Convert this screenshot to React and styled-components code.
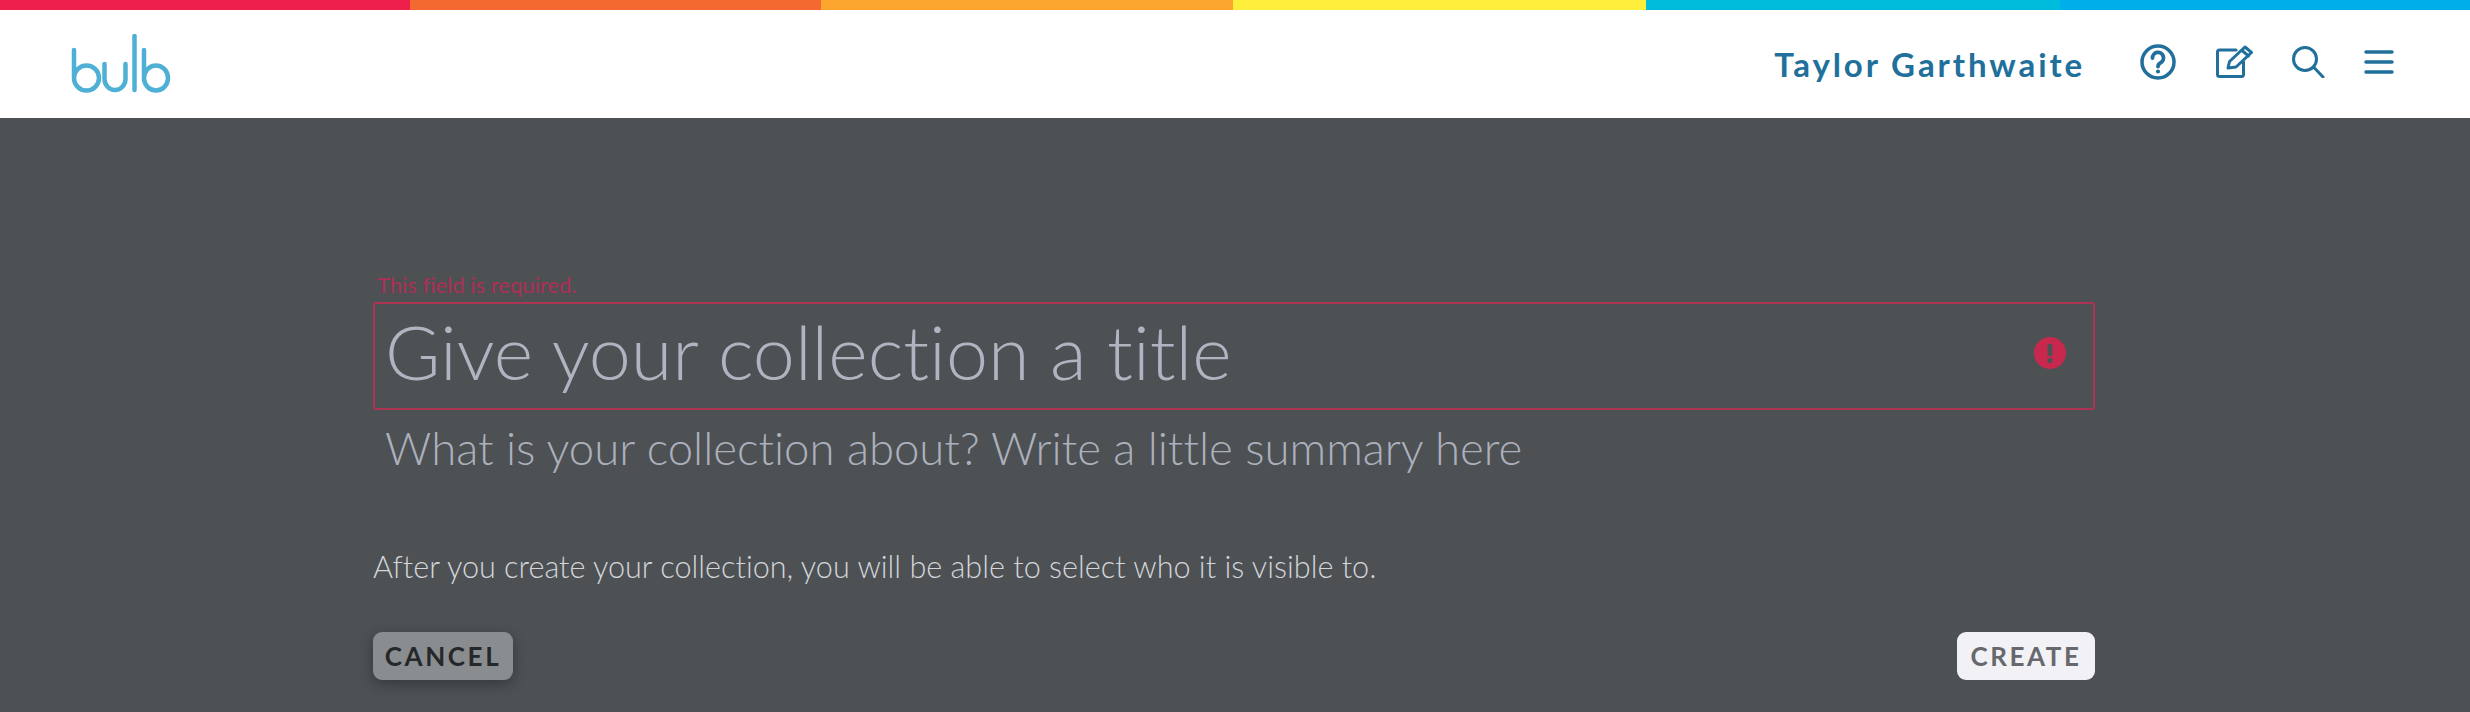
import React from "react";
import styled, { createGlobalStyle } from "styled-components";

const Global = createGlobalStyle`
html, body {
  margin: 0;
  padding: 0;
  background: #4d5154;
}
* { box-sizing: border-box; }
`;

const Page = styled.div`
  width: 2470px;
  height: 712px;
  overflow: hidden;
  display: flex;
  flex-direction: column;
  font-family: "Lato", sans-serif;
  font-variant-ligatures: none;
`;

const Rainbow = styled.div`
  display: flex;
  height: 10px;
`;

const Stripe = styled.div`
  width: ${(p) => p.size}px;
  background: ${(p) => p.color};
`;

const Header = styled.header`
  height: 108px;
  background: #fff;
  display: flex;
  align-items: center;
  justify-content: space-between;
  padding: 0 76px 0 71px;
`;

const Nav = styled.nav`
  display: flex;
  align-items: center;
`;

const UserName = styled.div`
  font-family: "Lato", sans-serif;
  font-weight: 700;
  font-size: 33px;
  letter-spacing: 2.9px;
  color: #20709b;
  margin-right: 55px;
`;

const IconButton = styled.div`
  display: flex;
  color: #20709b;
  margin-left: ${(p) => p.gap}px;
  margin-top: -5px;
`;

const Main = styled.main`
  flex: 1;
  background: #4d5154;
  padding: 155px 375px 0 373px;
  display: flex;
  flex-direction: column;
`;

const ErrorText = styled.div`
  font-size: 22px;
  line-height: 24px;
  padding-left: 4px;
  color: #ae2f54;
  margin-bottom: 5px;
`;

const TitleField = styled.div`
  height: 108px;
  border: 2px solid #ad3355;
  border-radius: 3px;
  display: flex;
  align-items: center;
  justify-content: space-between;
  padding: 0 27px 6px 10px;
`;

const TitlePlaceholder = styled.div`
  font-family: "Lato", sans-serif;
  font-weight: 300;
  font-size: 75.500px;
  line-height: 96px;
  margin-top: -4px;
  color: #b0b4c1;
`;

const Summary = styled.div`
  font-weight: 300;
  font-size: 45.500px;
  line-height: 60px;
  color: #acb0bc;
  padding-left: 12px;
  margin-top: 8px;
`;

const Notice = styled.div`
  font-weight: 300;
  font-size: 30.600px;
  line-height: 40px;
  color: #d3d5d9;
  margin-top: 69px;
`;

const Actions = styled.div`
  display: flex;
  justify-content: space-between;
  margin-top: 45px;
`;

const Button = styled.button`
  height: 48px;
  width: ${(p) => p.width}px;
  border: none;
  border-radius: 9px;
  padding: 0;
  font-family: "Lato", sans-serif;
  font-weight: 700;
  font-size: 26px;
  letter-spacing: 2.600px;
  text-transform: uppercase;
  background: ${(p) => (p.primary ? "#f1f1f6" : "#8a8d8f")};
  color: ${(p) => (p.primary ? "#66686d" : "#25282b")};
  box-shadow: ${(p) => (p.primary ? "none" : "0 4px 14px rgba(0, 0, 0, 0.3)")};
`;

const stripes = [
  { color: "#ef1f4c", size: 410 },
  { color: "#f4692f", size: 411 },
  { color: "#fba52f", size: 412 },
  { color: "#fdee3b", size: 413 },
  { color: "#00bcdc", size: 414 },
  { color: "#00aeea", size: 410 },
];

function LogoMark() {
  return (
    <svg width="100" height="60" viewBox="0 0 100 60" fill="none" stroke="#4fb0d5" strokeWidth="4.500" strokeLinecap="round">
      <path d="M3 16 V44 A12.500 12.500 0 1 0 15.500 31.500 A12.500 12.500 0 0 0 3 44" />
      <path d="M33.500 30 V45 A10.500 11 0 0 0 54.500 45 V30" />
      <path d="M63.500 2 V56" />
      <path d="M73 16 V44 A12 12.500 0 1 0 85 31.500 A12 12.500 0 0 0 73 44" />
    </svg>
  );
}

function HelpIcon() {
  return (
    <svg width="36" height="36" viewBox="0 0 36 36" fill="none" stroke="currentColor" strokeWidth="3.500" strokeLinecap="round">
      <circle cx="18" cy="18" r="16" />
      <path d="M12.500 14 A5.500 5.500 0 1 1 20.500 18.800 C18.800 19.800 18 20.700 18 22.500" strokeWidth="3.800" />
      <circle cx="18" cy="27.500" r="1.300" fill="currentColor" strokeWidth="1.500" />
    </svg>
  );
}

function EditIcon() {
  return (
    <svg width="38" height="33" viewBox="0 0 38 33" fill="none" stroke="currentColor" strokeWidth="3" strokeLinecap="round" strokeLinejoin="round">
      <path d="M20 5 H3.500 A2 2 0 0 0 1.500 7 V29.500 A2 2 0 0 0 3.500 31.500 H25.500 A2 2 0 0 0 27.500 29.500 V17" />
      <path d="M12 23 L13.500 16.500 L29 2 L35.500 7.500 L20 22 Z" />
      <path d="M26 5.500 L32.500 11" />
    </svg>
  );
}

function SearchIcon() {
  return (
    <svg width="33" height="32" viewBox="0 0 33 32" fill="none" stroke="currentColor" strokeWidth="3" strokeLinecap="round">
      <circle cx="13" cy="13" r="11.500" />
      <path d="M21.500 21 L31 31" />
    </svg>
  );
}

function MenuIcon() {
  return (
    <svg width="30" height="24" viewBox="0 0 30 24" fill="none" stroke="currentColor" strokeWidth="3.500" strokeLinecap="round">
      <path d="M2 2 H28" />
      <path d="M2 12 H28" />
      <path d="M2 22 H28" />
    </svg>
  );
}

function AlertIcon() {
  return (
    <svg width="32" height="32" viewBox="0 0 32 32">
      <circle cx="16" cy="16" r="16" fill="#c8274e" />
      <rect x="13.500" y="7" width="5" height="12" rx="1.500" fill="#4d5154" />
      <circle cx="16" cy="23.500" r="2.600" fill="#4d5154" />
    </svg>
  );
}

export default function App() {
  return (
    <Page>
      <Global />
      <Rainbow>
        {stripes.map((s) => (
          <Stripe key={s.color} color={s.color} size={s.size} />
        ))}
      </Rainbow>
      <Header>
        <LogoMark />
        <Nav>
          <UserName>Taylor Garthwaite</UserName>
          <IconButton gap={0}><HelpIcon /></IconButton>
          <IconButton gap={40}><EditIcon /></IconButton>
          <IconButton gap={38}><SearchIcon /></IconButton>
          <IconButton gap={39}><MenuIcon /></IconButton>
        </Nav>
      </Header>
      <Main>
        <ErrorText>This field is required.</ErrorText>
        <TitleField>
          <TitlePlaceholder>Give your collection a title</TitlePlaceholder>
          <AlertIcon />
        </TitleField>
        <Summary>What is your collection about? Write a little summary here</Summary>
        <Notice>After you create your collection, you will be able to select who it is visible to.</Notice>
        <Actions>
          <Button width={140}>Cancel</Button>
          <Button width={138} primary>Create</Button>
        </Actions>
      </Main>
    </Page>
  );
}
